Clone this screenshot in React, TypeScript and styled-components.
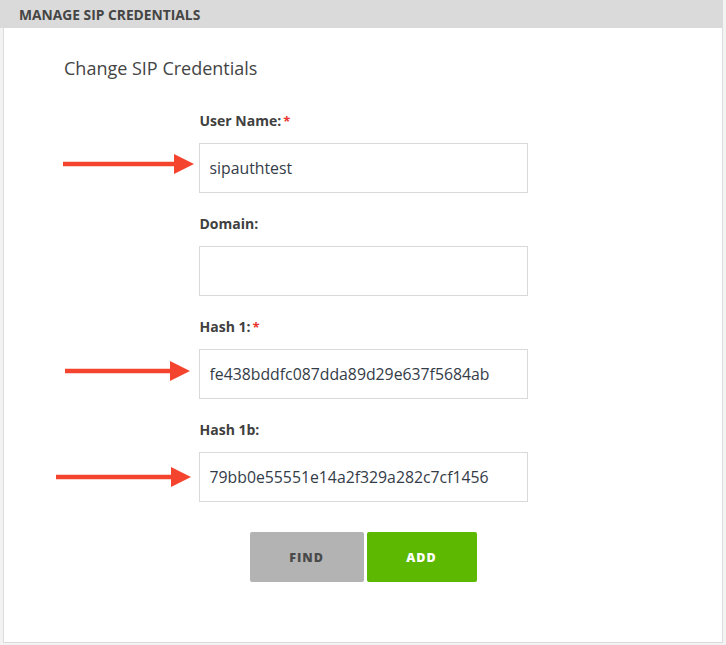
import React from "react";
import styled, { createGlobalStyle } from "styled-components";

const Global = createGlobalStyle`
  html, body { margin: 0; padding: 0; background: #f3f3f3; }
  * { box-sizing: border-box; }
`;

const Page = styled.div`
  width: 726px;
  height: 645px;
  background: #f3f3f3;
  font-family: "Open Sans", "Liberation Sans", sans-serif;
  color: #444;
`;

const Panel = styled.section`
  width: 723px;
  display: flex;
  flex-direction: column;
`;

const Header = styled.header`
  height: 28px;
  background: #dadada;
  padding-left: 19px;
  display: flex;
  align-items: center;
  font-size: 13.8px;
  font-weight: 700;
  color: #454545;
`;

const Body = styled.div`
  margin-left: 3px;
  height: 615px;
  background: #fff;
  border: 1px solid #dcdcdc;
  border-top: none;
  padding-top: 28px;
`;

const Title = styled.h2`
  margin: 0 0 32px 60px;
  font-size: 18px;
  line-height: 24px;
  font-weight: 400;
  color: #444;
`;

const Form = styled.div`
  width: 329px;
  margin: 0 auto;
  display: flex;
  flex-direction: column;
  gap: 22px;
`;

const Field = styled.div`
  display: flex;
  flex-direction: column;
  gap: 13px;
`;

const Label = styled.label`
  font-size: 14px;
  line-height: 18px;
  font-weight: 700;
  color: #404040;
  padding-left: 1px;
`;

const Req = styled.span`
  color: #e8322a;
  margin-left: 2px;
  font-size: 13px;
`;

const InputWrap = styled.div`
  position: relative;
`;

const Input = styled.input`
  width: 100%;
  height: 50px;
  border: 1px solid #d9d9d9;
  background: #fff;
  padding: 0 10px;
  font-family: "Open Sans", "Liberation Sans", sans-serif;
  font-size: 15.8px;
  color: #343c48;
  outline: none;
`;

const Arrow = styled.svg<{ $len: number; $gap: number; $dy: number }>`
  position: absolute;
  top: calc(50% + ${(p) => p.$dy}px);
  right: calc(100% + ${(p) => p.$gap}px);
  width: ${(p) => p.$len}px;
  height: 22px;
  transform: translateY(-50%);
  overflow: visible;
`;

const Buttons = styled.div`
  display: flex;
  justify-content: center;
  gap: 3px;
  margin-top: 30px;
`;

const Button = styled.button<{ $variant: "find" | "add" }>`
  height: 50px;
  width: ${(p) => (p.$variant === "find" ? 114 : 110)}px;
  border: none;
  border-radius: 2px;
  background: ${(p) => (p.$variant === "find" ? "#b3b3b3" : "#5cb800")};
  color: ${(p) => (p.$variant === "find" ? "#4a4a4a" : "#ffffff")};
  font-family: "Open Sans", "Liberation Sans", sans-serif;
  font-size: 12.5px;
  font-weight: 800;
  letter-spacing: 1px;
`;

type ArrowDef = { len: number; gap: number; dy: number };

function RedArrow({ len, gap, dy }: ArrowDef) {
  return (
    <Arrow $len={len} $gap={gap} $dy={dy} viewBox={`0 0 ${len} 22`}>
      <line x1="0" y1="11" x2={len - 16} y2="11" stroke="#f4442e" strokeWidth="4.5" />
      <polygon points={`${len - 20},1 ${len},11 ${len - 20},21`} fill="#f4442e" />
    </Arrow>
  );
}

type FieldDef = {
  label: string;
  required?: boolean;
  value: string;
  arrow?: ArrowDef;
};

const fields: FieldDef[] = [
  { label: "User Name:", required: true, value: "sipauthtest", arrow: { len: 131, gap: 5, dy: -4 } },
  { label: "Domain:", value: "" },
  { label: "Hash 1:", required: true, value: "fe438bddfc087dda89d29e637f5684ab", arrow: { len: 125, gap: 9, dy: -3 } },
  { label: "Hash 1b:", value: "79bb0e55551e14a2f329a282c7cf1456", arrow: { len: 135, gap: 8, dy: 0 } },
];

export default function App() {
  return (
    <Page>
      <Global />
      <Panel>
        <Header>MANAGE SIP CREDENTIALS</Header>
        <Body>
          <Title>Change SIP Credentials</Title>
          <Form>
            {fields.map((f) => (
              <Field key={f.label}>
                <Label>
                  {f.label}
                  {f.required && <Req>*</Req>}
                </Label>
                <InputWrap>
                  {f.arrow && <RedArrow {...f.arrow} />}
                  <Input defaultValue={f.value} />
                </InputWrap>
              </Field>
            ))}
          </Form>
          <Buttons>
            <Button $variant="find">FIND</Button>
            <Button $variant="add">ADD</Button>
          </Buttons>
        </Body>
      </Panel>
    </Page>
  );
}
